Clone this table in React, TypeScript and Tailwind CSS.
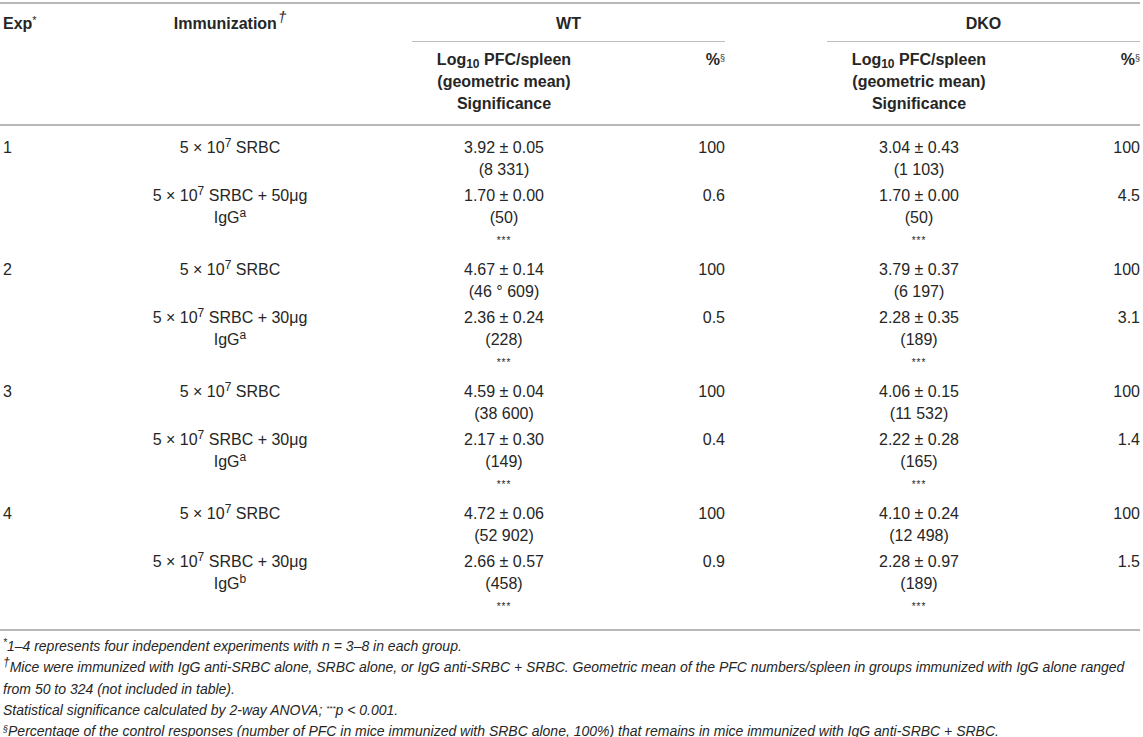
import type { ReactNode } from "react";

const cols = "grid grid-cols-[127px_200px_82px_184px_129px_102px_184px_129px] pl-[3px]";

type Row = {
  exp?: string;
  imm: ReactNode;
  wt: string[];
  wtPct: string;
  dko: string[];
  dkoPct: string;
  sig?: boolean;
};

const srbc = (
  <>
    5 × 10<sup>7</sup> SRBC
  </>
);

function withIgg(dose: string, letter: string) {
  return (
    <>
      <div>
        5 × 10<sup>7</sup> SRBC + {dose}μg
      </div>
      <div>
        IgG<sup>{letter}</sup>
      </div>
    </>
  );
}

const rows: Row[] = [
  { exp: "1", imm: srbc, wt: ["3.92 ± 0.05", "(8 331)"], wtPct: "100", dko: ["3.04 ± 0.43", "(1 103)"], dkoPct: "100" },
  { imm: withIgg("50", "a"), wt: ["1.70 ± 0.00", "(50)"], wtPct: "0.6", dko: ["1.70 ± 0.00", "(50)"], dkoPct: "4.5", sig: true },
  { exp: "2", imm: srbc, wt: ["4.67 ± 0.14", "(46 ° 609)"], wtPct: "100", dko: ["3.79 ± 0.37", "(6 197)"], dkoPct: "100" },
  { imm: withIgg("30", "a"), wt: ["2.36 ± 0.24", "(228)"], wtPct: "0.5", dko: ["2.28 ± 0.35", "(189)"], dkoPct: "3.1", sig: true },
  { exp: "3", imm: srbc, wt: ["4.59 ± 0.04", "(38 600)"], wtPct: "100", dko: ["4.06 ± 0.15", "(11 532)"], dkoPct: "100" },
  { imm: withIgg("30", "a"), wt: ["2.17 ± 0.30", "(149)"], wtPct: "0.4", dko: ["2.22 ± 0.28", "(165)"], dkoPct: "1.4", sig: true },
  { exp: "4", imm: srbc, wt: ["4.72 ± 0.06", "(52 902)"], wtPct: "100", dko: ["4.10 ± 0.24", "(12 498)"], dkoPct: "100" },
  { imm: withIgg("30", "b"), wt: ["2.66 ± 0.57", "(458)"], wtPct: "0.9", dko: ["2.28 ± 0.97", "(189)"], dkoPct: "1.5", sig: true },
];

function Stars() {
  return <div className="mb-[4px] pt-[2px] text-[10px] leading-[20px] tracking-[1px]">***</div>;
}

function Values({ lines, sig }: { lines: string[]; sig?: boolean }) {
  return (
    <div className="text-center">
      {lines.map((l) => (
        <div key={l}>{l}</div>
      ))}
      {sig && <Stars />}
    </div>
  );
}

function LogHeader() {
  return (
    <div className="pt-[7px] pb-[9px] text-center">
      <div>
        Log<sub>10</sub> PFC/spleen
      </div>
      <div>(geometric mean)</div>
      <div>Significance</div>
    </div>
  );
}

function PctHeader() {
  return (
    <div className="pt-[7px] pb-[9px] text-right">
      %<sup className="text-[9px] font-normal">§</sup>
    </div>
  );
}

export default function App() {
  return (
    <div
      className="w-[1143px] bg-white text-[#262626]"
      style={{ fontFamily: '"Liberation Sans", Arial, sans-serif' }}
    >
      <div className="mt-[2px] w-[1140px] border-t-2 border-b-2 border-[#b8b8b8] text-[16px] leading-[22px]">
        {/* header */}
        <div className={`${cols} font-bold`}>
          <div className="row-span-2 pt-[9px]">
            Exp<sup className="text-[11px] font-normal">*</sup>
          </div>
          <div className="row-span-2 pt-[9px] text-center">
            Immunization
            <sup className="ml-[1px] text-[15px] font-normal italic">†</sup>
          </div>
          <div className="col-start-4 col-span-2 border-b border-[#bdbdbd] pt-[9px] pb-[6px] text-center">
            WT
          </div>
          <div className="col-start-7 col-span-2 border-b border-[#bdbdbd] pt-[9px] pb-[6px] text-center">
            DKO
          </div>
          <div className="col-start-4">
            <LogHeader />
          </div>
          <PctHeader />
          <div className="col-start-7">
            <LogHeader />
          </div>
          <PctHeader />
        </div>

        {/* body */}
        <div className="border-t-2 border-[#b8b8b8] pt-[9px] pb-[6px]">
          {rows.map((r, i) => (
            <div key={i} className={`${cols} py-[2px]`}>
              <div>{r.exp}</div>
              <div className="text-center">{r.imm}</div>
              <div />
              <Values lines={r.wt} sig={r.sig} />
              <div className="text-right">{r.wtPct}</div>
              <div />
              <Values lines={r.dko} sig={r.sig} />
              <div className="text-right">{r.dkoPct}</div>
            </div>
          ))}
        </div>
      </div>

      {/* footnotes */}
      <div className="mt-[5px] w-[1140px] pl-[3px] text-[14px] leading-[21.3px] italic">
        <div>
          <sup className="text-[10px]">*</sup>1–4 represents four independent experiments with n = 3–8 in each group.
        </div>
        <div>
          <sup className="text-[12px]">†</sup>Mice were immunized with IgG anti-SRBC alone, SRBC alone, or IgG anti-SRBC + SRBC. Geometric mean of the PFC numbers/spleen in groups immunized with IgG alone ranged
          <br />
          from 50 to 324 (not included in table).
        </div>
        <div>
          Statistical significance calculated by 2-way ANOVA; <sup className="text-[8px]">***</sup>p &lt; 0.001.
        </div>
        <div>
          <sup className="text-[9px]">§</sup>Percentage of the control responses (number of PFC in mice immunized with SRBC alone, 100%) that remains in mice immunized with IgG anti-SRBC + SRBC.
        </div>
      </div>
    </div>
  );
}
